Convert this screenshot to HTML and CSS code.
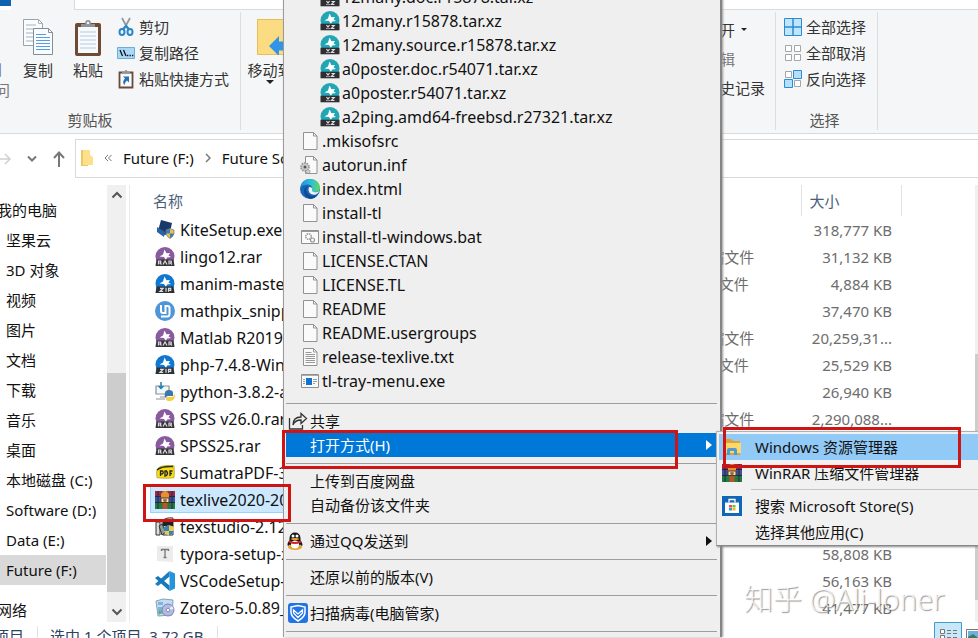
FILE: index.html
```html
<!DOCTYPE html>
<html lang="zh-CN">
<head>
<meta charset="utf-8">
<title>Future (F:)</title>
<link rel="stylesheet" href="styles.css">
</head>
<body>
<svg class="defs" aria-hidden="true">
  <defs>
    <linearGradient id="edge-a" x1="0" y1="0" x2="1" y2="0"><stop offset="0" stop-color="#1b8fe0"/><stop offset=".55" stop-color="#2fc0d8"/><stop offset="1" stop-color="#62d957"/></linearGradient>
    <symbol id="i-rar" viewBox="0 0 20 20"><circle cx="10" cy="9.500" r="9.500" fill="#8a5a9e"/><path d="M9.500 2.500l2 3.700 3.500-.2-1.500 2.500 2.500 1.500-4 .5-1 2.500-2-3-4.500-.5 3.500-2z" fill="#fff"/><path d="M1.500 12.500h17l1 6.500H.5z" fill="#37333b"/><path d="M3.500 17.500v-3.500h2q1 1-.5 2l1.500 1.500M8 17.500l2-3.500 2 3.500M14 17.500v-3.500h2q1 1-.5 2l1.500 1.500" fill="none" stroke="#ddd" stroke-width="1.200"/></symbol>
    <symbol id="i-zip" viewBox="0 0 20 20"><circle cx="10" cy="9.500" r="9.500" fill="#1078d0"/><path d="M9.500 2.500l2 3.700 3.500-.2-1.500 2.500 2.500 1.500-4 .5-1 2.500-2-3-4.500-.5 3.500-2z" fill="#fff"/><path d="M1.500 12.500h17l1 6.500H.5z" fill="#2b3138"/><path d="M5 14.300h3.200l-3.200 3h3.200M11 13.800v4M13.500 17.800v-3.500h2.200v2h-2" fill="none" stroke="#ddd" stroke-width="1.200"/></symbol>
    <symbol id="i-xz" viewBox="0 0 20 20"><circle cx="10" cy="9.500" r="9.500" fill="#22a5b4"/><path d="M9.500 2.500l2 3.700 3.500-.2-1.500 2.500 2.500 1.500-4 .5-1 2.500-2-3-4.500-.5 3.500-2z" fill="#fff"/><path d="M.5 12.700h19v6.600H.5z" fill="#2d2f33"/><path d="M6.500 14l3 4M9.500 14l-3 4M11.500 14.500h2.700l-2.700 3h3" fill="none" stroke="#ddd" stroke-width="1.200"/></symbol>
    <symbol id="i-kite" viewBox="0 0 20 20"><path d="M6 0l11 3-2 9-5 3-7-4z" fill="#173a6b"/><path d="M2 7l8 5-1 5-7-5z" fill="#2c62a8"/><path d="M11 10l4-1.500L19 10v3.500q-1 3.500-4 5-3-1.500-4-5z" fill="#e8c24a" stroke="#6b7380" stroke-width=".7"/><path d="M15 8.800V13.500h-4v-3.300zM15 13.500h4q-1 3.300-4 4.700z" fill="#3d7ab8"/></symbol>
    <symbol id="i-mathpix" viewBox="0 0 20 20"><circle cx="10" cy="10" r="10" fill="#4e96d8"/><path d="M6 4v6q0 2 2 2h2.500V5h2q2 0 2 2v6q0 2.500-2.500 2.500H6" fill="none" stroke="#fff" stroke-width="2"/></symbol>
    <symbol id="i-python" viewBox="0 0 20 20"><path d="M1 4h13v8H1zM5 15h6M1 17h9" fill="#f4f8fb" stroke="#8b9299" stroke-width="1.200"/><path d="M6 0v6M3.500 4L6 6.500 8.500 4" fill="none" stroke="#1583b5" stroke-width="1.500"/><path d="M10 11q0-3 4-3t4 3v3h-5q-2 0-2 2-2-1-1-5z" fill="#3878ac"/><path d="M19 12q2 1 0 5-1 2-4 2-4 0-4-2v-1q0-1 2-1h4q2 0 2-3z" fill="#f5cf45"/></symbol>
    <symbol id="i-pdf" viewBox="0 0 20 20"><path d="M5 3.500Q10 2 19 2.800q.8 6 0 12-9 1-17 0Q1 10 2 7z" fill="#f6dc18" stroke="#9a8c1a" stroke-width=".6"/><path d="M2 7Q6 3 18 3.500" stroke="#33300c" fill="none" stroke-width="1.500"/><path d="M5.500 13V8h2q1.500 1.300 0 2.800H6M10 13V8h1.500q2 2.500 0 4.500zM15 13V8h2.500M15 10.500h2" fill="none" stroke="#222" stroke-width="1.300"/></symbol>
    <symbol id="i-winrar" viewBox="0 0 20 20"><path d="M0 1h20v6H0z" fill="#9c2847"/><path d="M0 7h20v6H0z" fill="#3d50a2"/><path d="M0 13h20v6H0z" fill="#237a43"/><path d="M0 6.500h20M0 12.500h20M3 1v18M17 1v18" stroke="#222c38" stroke-width="1"/><path d="M7.500 1h5v18h-5z" fill="#b5562b"/><path d="M6 4q4-6 8 0v5H6z" fill="#e3922d"/><path d="M6 8h8v4.500H6z" fill="#e9e4da" stroke="#5f3218"/><path d="M8 8.500q2 2.500 4 0v3H8z" fill="#c98233"/><path d="M9.500 9h1v3h-1z" fill="#444"/></symbol>
    <symbol id="i-texstudio" viewBox="0 0 20 20"><path d="M1 5h4v13H1zM7 4q4-4 11-3v17H8z" fill="#ddd" stroke="#333"/><path d="M8 2h10v7H8z" fill="#222"/><path d="M10 3h6v2h-6z" fill="#ddd"/><path d="M4 9l3-2 4 8-4 3z" fill="#8b9992" stroke="#333"/><path d="M9 10l5-2 5 2v4q-1 3-5 5-4-2-5-5z" fill="#ecc84c"/><path d="M14 8v6H9v-4zM14 14h5q-1 3-5 5z" fill="#3482bb"/></symbol>
    <symbol id="i-typora" viewBox="0 0 20 20"><path d="M2 2h16v16l-16-1z" fill="#ececec"/><path d="M6.500 7V5.500h7V7M10 5.500v8M8.500 13.500h3" fill="none" stroke="#777" stroke-width="1.300"/></symbol>
    <symbol id="i-vscode" viewBox="0 0 20 20"><path d="M14.500 0L20 2.500v15L14.500 20z" fill="#2495dc"/><path d="M14.500 0v5.500L3 15 0 13z" fill="#1b7cc2"/><path d="M14.500 20v-5.500L3 5 0 7z" fill="#1777bb"/></symbol>
    <symbol id="i-zotero" viewBox="0 0 20 20"><path d="M1 3l7-2 10 1-1 15-14 1z" fill="#c4dcef" stroke="#82a2bd"/><path d="M3 4h5v3H3zM3 9h5v7H3z" fill="#7db6dc"/><path d="M4 12l3 2-3 3z" fill="#63ad58"/><circle cx="13" cy="12" r="6" fill="#b5bae3" stroke="#7c83ba"/><path d="M13 12l4-4 1.500 3z" fill="#f2f0ff"/><circle cx="13" cy="12" r="1.800" fill="#fff" stroke="#858bb8"/></symbol>
    <symbol id="i-file" viewBox="0 0 20 20"><path d="M3.500 1.500h10l3.500 3.500v13.500H3.500z" fill="#fafafa" stroke="#929292"/><path d="M13.500 1.500V5H17" fill="none" stroke="#929292"/></symbol>
    <symbol id="i-text" viewBox="0 0 20 20"><path d="M3.500 1.500h10l3.500 3.500v13.500H3.500z" fill="#fafafa" stroke="#929292"/><path d="M13.500 1.500V5H17M5.500 5.500h6M5.500 7.500h9.500M5.500 9.500h9.500M5.500 11.500h9.500M5.500 13.500h9.500M5.500 15.500h9.500" fill="none" stroke="#999"/></symbol>
    <symbol id="i-inf" viewBox="0 0 20 20"><path d="M5.500 1.500h8l3.500 3.500v13.500H5.500z" fill="#fafafa" stroke="#929292"/><path d="M13.500 1.500V5H17" fill="none" stroke="#929292"/><circle cx="5" cy="12" r="4" fill="#ccc" stroke="#999" stroke-width="1.800" stroke-dasharray="1.500 1"/><circle cx="5" cy="12" r="1.500" fill="#555"/><circle cx="8" cy="16.500" r="2" fill="#ccc" stroke="#888" stroke-dasharray="1 1"/></symbol>
    <symbol id="i-edge" viewBox="0 0 20 20"><circle cx="10" cy="10" r="10" fill="#1767b5"/><path d="M.5 8Q2 0 10 0q9 0 10 8.500 0 4.500-5 4.500-3.500 0-3-2 1-5-4-5.500Q3 5.500.5 8z" fill="url(#edge-a)"/><path d="M8 7q-4 4 0 8 4 3.500 9.500.5-2 4-7 4.500Q4 18 4 12q0-4 4-5z" fill="#104a94"/><path d="M9 8q4 0 3 3 0 2 3 2.200 2.500.2 4.500-1.500-1 3-4 4-4 .5-6-2-1.800-3-.5-5.700z" fill="#eef3f6"/></symbol>
    <symbol id="i-bat" viewBox="0 0 20 20"><path d="M1.500 3.500h17v13h-17z" fill="#fafafa" stroke="#909090"/><path d="M2 4.500h16" stroke="#999"/><circle cx="8.500" cy="9.500" r="2.800" fill="none" stroke="#999" stroke-dasharray="1.500 .7" stroke-width="1.500"/><circle cx="12.500" cy="13" r="2" fill="none" stroke="#999" stroke-width="1.200"/></symbol>
    <symbol id="i-exe" viewBox="0 0 20 20"><path d="M1.500 3.500h17v13h-17z" fill="#fafafa" stroke="#909090"/><path d="M2 4.500h16" stroke="#aaa"/><path d="M6 7h6v7H6z" fill="#1173cf"/><path d="M3 8.500h2M3 10.500h2M3 12.500h2M13 8.500h4M13 10.500h4M13 12.500h2" stroke="#999"/></symbol>
    <symbol id="i-share" viewBox="0 0 20 20"><path d="M1.500 7v11h13v-4M5 14q0-8 8-8V2.500l5.500 5-5.500 5V9q-6 0-8 5z" fill="none" stroke="#333" stroke-width="1.300"/></symbol>
    <symbol id="i-qq" viewBox="0 0 18 20"><ellipse cx="9" cy="16" rx="7" ry="3" fill="#e8a22b"/><path d="M3.500 7Q4 1.500 9 1.500T14.500 7v2q3 5 1.500 6l-2-1.500q-5 5-10 0L2 15Q.5 13 3.500 9z" fill="#171717"/><ellipse cx="9" cy="13.500" rx="4" ry="4" fill="#fff"/><path d="M3 9q6 4 12 0v2.500q-6 3-12 0z" fill="#d6222b"/><circle cx="7" cy="5" r="1.500" fill="#fff"/><circle cx="11" cy="5" r="1.500" fill="#fff"/><ellipse cx="9" cy="8" rx="4" ry="1" fill="#eda528"/></symbol>
    <symbol id="i-shield" viewBox="0 0 20 20"><rect width="20" height="20" rx="3" fill="#2273e6"/><path d="M3 4l7-1.500L17 4v5q0 5-7 9-7-4-7-9z" fill="none" stroke="#fff" stroke-width="1.500"/><path d="M5.500 7L10 11l4.500-4v3L10 14.500 5.500 10z" fill="none" stroke="#fff" stroke-width="1.300"/></symbol>
    <symbol id="i-explorer" viewBox="0 0 20 20"><path d="M3 2h6l2 2h7v14H3z" fill="#e2a32e"/><path d="M3 6h16v10H3z" fill="#fbd86d"/><path d="M5 18v-5q0-2 2-2h6q2 0 2 2v5h-3v-4H8v4z" fill="#4c9bd4"/></symbol>
    <symbol id="i-store" viewBox="0 0 20 20"><path d="M0 0h20v20H0z" fill="#1067b8"/><path d="M3 6.500h14V17H3z" fill="#fff"/><path d="M7 6.500V3.500h6v3" fill="none" stroke="#fff" stroke-width="1.300"/><path d="M7 9h3v2.500H7z" fill="#e8503a"/><path d="M10.500 9h3v2.500h-3z" fill="#7cb83c"/><path d="M7 12h3v2.500H7z" fill="#2b9be0"/><path d="M10.500 12h3v2.500h-3z" fill="#f0b52c"/></symbol>
    <symbol id="i-copy" viewBox="0 0 30 36"><path d="M.5.500h15l4 4v22H.5z" fill="#fafcfe" stroke="#9aa1a8"/><path d="M15.500.500v4h4M3 6h10M3 10h14M3 14h14M3 18h14M3 22h14" fill="none" stroke="#a3b4c5"/><path d="M10.500 9.500h15l4 4v22h-19z" fill="#f8fbff" stroke="#858d96"/><path d="M25.500 9.500v4h4" fill="none" stroke="#858d96"/><path d="M13 15.500h10M13 18.500h14M13 21.500h14M13 24.500h14M13 27.500h14M13 30.500h14" stroke="#5a9ce0"/></symbol>
    <symbol id="i-paste" viewBox="0 0 28 38"><rect x="1" y="4" width="26" height="33" rx="2" fill="#704a33"/><path d="M4 8h20v26H4z" fill="#f7fafc"/><path d="M6 13h16M6 17h16M6 21h16M6 25h16M6 29h16" stroke="#b5cce0"/><path d="M7 8V5h4q0-4 3-4t3 4h4v3z" fill="#8e9499"/><circle cx="14" cy="4" r="1.300" fill="#f3f3f3"/></symbol>
    <symbol id="i-cut" viewBox="0 0 18 20"><path d="M5 1l6.500 12M13 1L6.500 13" stroke="#9299a0" stroke-width="1.800"/><ellipse cx="5" cy="15" rx="2.500" ry="3" fill="none" stroke="#2787c9" stroke-width="2"/><ellipse cx="13" cy="15" rx="2.500" ry="3" fill="none" stroke="#2787c9" stroke-width="2"/><path d="M6 12l3-3 3 3" fill="none" stroke="#2787c9" stroke-width="2"/></symbol>
    <symbol id="i-path" viewBox="0 0 18 12"><path d="M.5.500h17v11H.5z" fill="#a9d9f7" stroke="#6fadd5"/><path d="M3 3l2.500 6M6.500 3L9 9" stroke="#111" stroke-width="1.300"/><path d="M10 8.500h1.300M12.500 8.500h1.300M15 8.500h1.300" stroke="#111" stroke-width="1.300"/></symbol>
    <symbol id="i-shortcut" viewBox="0 0 18 20"><path d="M2.500 3.500h13v15h-13z" fill="#f8fafc" stroke="#684b3b" stroke-width="1.800"/><path d="M5 4.500V3h2.500q0-2 1.500-2t1.500 2H13v1.500z" fill="#90959a"/><path d="M6 7.500h6v6l-2-2q-2 1-2.500 4.500-3-3 .5-6.500z" fill="#2770b1"/></symbol>
    <symbol id="i-move" viewBox="0 0 36 36"><path d="M.5.500h35v35H.5z" fill="#fbdc82" stroke="#e8bd55"/><path d="M12 27L22 17v5.500h14v9H22V37z" fill="#2f95e4"/></symbol>
    <symbol id="i-all" viewBox="0 0 18 18"><path d="M.5.500h17v17H.5z" fill="#bfe4fb" stroke="#2b8cd0"/><path d="M9 0v18M0 9h18" stroke="#2b8cd0" stroke-width="1.500"/></symbol>
    <symbol id="i-none" viewBox="0 0 18 18"><path d="M1.500 1.500h6v6h-6zM10.500 1.500h6v6h-6zM1.500 10.500h6v6h-6zM10.500 10.500h6v6h-6z" fill="#fff" stroke="#a5a5a5"/></symbol>
    <symbol id="i-invert" viewBox="0 0 18 18"><path d="M1.500 1.500h6v6h-6zM10.500 10.500h6v6h-6z" fill="#fff" stroke="#a5a5a5"/><path d="M9.500.500h8v8h-8zM.5 9.500h8v8h-8z" fill="#b3dffa" stroke="#2b8cd0"/></symbol>
  </defs>
</svg>

<div class="window">
  <div class="tabs"><span class="tab-file"></span><span class="tab-home"></span><span class="tab-rest"></span></div>

  <header class="ribbon">
    <section class="group clipboard">
      <div class="tools">
        <button class="big pin"><span class="pin-top">固定到</span><span>快速访问</span></button>
        <button class="big copy"><svg width="30" height="36"><use href="#i-copy"/></svg>复制</button>
        <button class="big paste"><svg width="28" height="38"><use href="#i-paste"/></svg>粘贴</button>
        <div class="stack">
          <button><svg width="18" height="20"><use href="#i-cut"/></svg>剪切</button>
          <button><svg width="18" height="12"><use href="#i-path"/></svg>复制路径</button>
          <button><svg width="18" height="20"><use href="#i-shortcut"/></svg>粘贴快捷方式</button>
        </div>
      </div>
      <p class="caption">剪贴板</p>
    </section>
    <section class="group organize">
      <button class="big move"><svg width="36" height="36"><use href="#i-move"/></svg>移动到<i class="caret"></i></button>
    </section>
    <section class="group open">
      <button>打开<i class="caret"></i></button>
      <button class="dim">编辑</button>
      <button>历史记录</button>
    </section>
    <section class="group select">
      <div class="stack">
        <button><svg width="18" height="18"><use href="#i-all"/></svg>全部选择</button>
        <button><svg width="18" height="18"><use href="#i-none"/></svg>全部取消</button>
        <button><svg width="18" height="18"><use href="#i-invert"/></svg>反向选择</button>
      </div>
      <p class="caption">选择</p>
    </section>
  </header>

  <div class="location">
    <div class="arrows">
      <svg width="11" height="14" viewBox="0 0 11 14"><path d="M0 7h10M5 2l5 5-5 5" fill="none" stroke="#d0d0d0" stroke-width="1.500"/></svg>
      <svg width="10" height="8" viewBox="0 0 10 8"><path d="M1 1.500l4 4 4-4" fill="none" stroke="#777" stroke-width="2"/></svg>
      <svg width="12" height="16" viewBox="0 0 12 16"><path d="M6 16V2M1 7l5-5.500L11 7" fill="none" stroke="#777" stroke-width="2"/></svg>
    </div>
    <nav class="address">
      <svg width="12" height="17" viewBox="0 0 12 17"><path d="M0 1h7v16H0z" fill="#edc763"/><path d="M2 1h7v5l3 2v8H2z" fill="#fce08c"/></svg>
      <svg width="8" height="8" viewBox="0 0 8 8"><path d="M4 1L1 4l3 3M7.500 1l-3 3 3 3" fill="none" stroke="#777"/></svg>
      <a href="#f">Future (F:)</a>
      <svg width="6" height="10" viewBox="0 0 6 10"><path d="M1 1l4 4-4 4" fill="none" stroke="#777" stroke-width="1.500"/></svg>
      <a href="#s">Future Software</a>
    </nav>
  </div>

  <main class="content">
    <nav class="tree">
      <a class="root" href="#pc">我的电脑</a>
      <a href="#n1">坚果云</a>
      <a href="#n2">3D 对象</a>
      <a href="#n3">视频</a>
      <a href="#n4">图片</a>
      <a href="#n5">文档</a>
      <a href="#n6">下载</a>
      <a href="#n7">音乐</a>
      <a href="#n8">桌面</a>
      <a href="#c">本地磁盘 (C:)</a>
      <a href="#d">Software (D:)</a>
      <a href="#e">Data (E:)</a>
      <a class="current" href="#f">Future (F:)</a>
      <a class="root network" href="#net">网络</a>
    </nav>
    <div class="scroll">
      <svg width="12" height="8" viewBox="0 0 12 8"><path d="M1.500 6.500L6 2l4.500 4.500" fill="none" stroke="#555" stroke-width="2"/></svg>
      <span class="thumb"></span>
      <svg width="12" height="8" viewBox="0 0 12 8"><path d="M1.500 1.500L6 6l4.500-4.500" fill="none" stroke="#555" stroke-width="2"/></svg>
    </div>
    <div class="files">
      <table>
        <thead><tr><th class="name">名称</th><th class="type"></th><th class="size"><span>大小</span></th></tr></thead>
        <tbody>
          <tr><td><svg><use href="#i-kite"/></svg>KiteSetup.exe</td><td></td><td>318,777 KB</td></tr>
          <tr><td><svg><use href="#i-rar"/></svg>lingo12.rar</td><td>RAR 压缩文件</td><td>31,132 KB</td></tr>
          <tr><td><svg><use href="#i-zip"/></svg>manim-master.zip</td><td>ZIP 压缩文件</td><td>4,884 KB</td></tr>
          <tr><td><svg><use href="#i-mathpix"/></svg>mathpix_snipping</td><td></td><td>37,470 KB</td></tr>
          <tr><td><svg><use href="#i-rar"/></svg>Matlab R2019b.rar</td><td>RAR 压缩文件</td><td>20,259,31...</td></tr>
          <tr><td><svg><use href="#i-zip"/></svg>php-7.4.8-Win32</td><td>ZIP 压缩文件</td><td>25,529 KB</td></tr>
          <tr><td><svg><use href="#i-python"/></svg>python-3.8.2-amd64</td><td></td><td>26,940 KB</td></tr>
          <tr><td><svg><use href="#i-rar"/></svg>SPSS v26.0.rar</td><td>RAR 压缩文件</td><td>2,290,088...</td></tr>
          <tr><td><svg><use href="#i-rar"/></svg>SPSS25.rar</td><td></td><td></td></tr>
          <tr><td><svg><use href="#i-pdf"/></svg>SumatraPDF-3.2</td><td></td><td></td></tr>
          <tr class="picked"><td><svg><use href="#i-winrar"/></svg>texlive2020-2020</td><td></td><td></td></tr>
          <tr><td><svg><use href="#i-texstudio"/></svg>texstudio-2.12.22</td><td></td><td></td></tr>
          <tr><td><svg><use href="#i-typora"/></svg>typora-setup-x64</td><td></td><td>58,808 KB</td></tr>
          <tr><td><svg><use href="#i-vscode"/></svg>VSCodeSetup-x64</td><td></td><td>56,163 KB</td></tr>
          <tr><td><svg><use href="#i-zotero"/></svg>Zotero-5.0.89_setup</td><td></td><td>41,477 KB</td></tr>
        </tbody>
      </table>
    </div>
    <div class="scroll slim"><span class="thumb"></span></div>
  </main>

  <footer class="status">
    <span class="count">项目</span>
    <span class="chosen">选中 1 个项目&nbsp; 3.72 GB</span>
    <span class="views">
      <svg width="28" height="20" viewBox="0 0 28 20"><path d="M.5.500h27v22H.5z" fill="#c8e8f9" stroke="#3f9ccb"/><path d="M6.500 7.500h4v4h-4zM6.500 13.500h4v4h-4z" fill="#fff" stroke="#777"/><path d="M13 8.500h4M19 8.500h4M13 11.500h4M19 11.500h4M13 15.500h4M19 15.500h4" stroke="#777"/></svg>
      <svg width="12" height="20" viewBox="0 0 12 20"><path d="M.5 7.500h14v14H.5z" fill="#fff" stroke="#777"/><path d="M2 9h10v11H2z" fill="#6db1df"/><path d="M2 15l5-3 5 4v4H2z" fill="#3b7b62"/></svg>
    </span>
  </footer>
</div>

<div class="menu" role="menu">
  <div class="files-list">
    <button class="deep"><svg><use href="#i-xz"/></svg>12many.doc.r15878.tar.xz</button>
    <button class="deep"><svg><use href="#i-xz"/></svg>12many.r15878.tar.xz</button>
    <button class="deep"><svg><use href="#i-xz"/></svg>12many.source.r15878.tar.xz</button>
    <button class="deep"><svg><use href="#i-xz"/></svg>a0poster.doc.r54071.tar.xz</button>
    <button class="deep"><svg><use href="#i-xz"/></svg>a0poster.r54071.tar.xz</button>
    <button class="deep"><svg><use href="#i-xz"/></svg>a2ping.amd64-freebsd.r27321.tar.xz</button>
    <button><svg><use href="#i-file"/></svg>.mkisofsrc</button>
    <button><svg><use href="#i-inf"/></svg>autorun.inf</button>
    <button><svg><use href="#i-edge"/></svg>index.html</button>
    <button><svg><use href="#i-file"/></svg>install-tl</button>
    <button><svg><use href="#i-bat"/></svg>install-tl-windows.bat</button>
    <button><svg><use href="#i-file"/></svg>LICENSE.CTAN</button>
    <button><svg><use href="#i-file"/></svg>LICENSE.TL</button>
    <button><svg><use href="#i-file"/></svg>README</button>
    <button><svg><use href="#i-file"/></svg>README.usergroups</button>
    <button><svg><use href="#i-text"/></svg>release-texlive.txt</button>
    <button><svg><use href="#i-exe"/></svg>tl-tray-menu.exe</button>
  </div>
  <hr class="wide">
  <button><svg><use href="#i-share"/></svg>共享</button>
  <button class="active"><svg></svg>打开方式(H)<i class="more"></i></button>
  <hr>
  <button><svg></svg>上传到百度网盘</button>
  <button><svg></svg>自动备份该文件夹</button>
  <hr>
  <button class="qq"><svg><use href="#i-qq"/></svg>通过QQ发送到<i class="more"></i></button>
  <hr>
  <button><svg></svg>还原以前的版本(V)</button>
  <hr>
  <button><svg><use href="#i-shield"/></svg>扫描病毒(电脑管家)</button>
  <hr>
</div>

<div class="submenu" role="menu">
  <button class="hover"><svg><use href="#i-explorer"/></svg>Windows 资源管理器</button>
  <button><svg><use href="#i-winrar"/></svg>WinRAR 压缩文件管理器</button>
  <hr>
  <button><svg><use href="#i-store"/></svg>搜索 Microsoft Store(S)</button>
  <button><svg></svg>选择其他应用(C)</button>
</div>

<div class="mark mark-file"></div>
<div class="mark mark-open"></div>
<div class="mark mark-app"></div>
<div class="watermark">知乎 @Ali-loner</div>
</body>
</html>
```
FILE: styles.css
```css
* { box-sizing: border-box; }
body {
  margin: 0;
  position: relative;
  height: 100vh;
  overflow: hidden;
  background: #fff;
  color: #111;
  font-family: "Noto Sans", "Noto Sans CJK SC", sans-serif;
  font-size: 15px;
  line-height: 20px;
}
.defs { position: absolute; width: 0; height: 0; }
button {
  display: flex;
  align-items: center;
  padding: 0;
  border: 0;
  background: none;
  color: inherit;
  font: inherit;
  white-space: nowrap;
  text-align: left;
}
a { color: inherit; text-decoration: none; white-space: nowrap; }
p { margin: 0; }
svg { flex: none; display: block; }

.window { display: flex; flex-direction: column; height: 100%; }

.tabs { display: flex; height: 10px; background: #fff; }
.tab-file { width: 11px; height: 6px; background: #0f62b0; }
.tab-home { width: 64px; background: #f5f6f7; border-right: 1px solid #dadbdc; }
.tab-rest { flex: 1; border-bottom: 1px solid #dadbdc; }

.ribbon {
  display: flex;
  height: 124px;
  padding: 2px 0 3px;
  background: #f5f6f7;
  border-bottom: 1px solid #d8d9da;
  color: #333;
}
.group { position: relative; display: flex; flex-direction: column; border-right: 1px solid #dcdddf; }
.tools { display: flex; }
.caret {
  width: 0;
  height: 0;
  border: 3px solid transparent;
  border-top-color: #222;
  border-bottom: 0;
}
.caption { margin-top: auto; text-align: center; color: #555; }
.clipboard { width: 241px; }
.clipboard .caption { padding-right: 60px; }
.big { flex-direction: column; padding-top: 7px; text-align: center; }
.big svg { margin-bottom: 5px; }
.pin { width: 10px; padding-top: 48px; align-items: flex-end; overflow: hidden; color: #777; }
.pin-top { padding-right: 8px; }
.copy { width: 56px; }
.paste { width: 44px; }
.paste svg { margin-bottom: 3px; }
.stack { display: flex; flex-direction: column; padding: 2px 0 0 7px; }
.stack button { height: 26px; gap: 4px; }
.organize { width: 440px; padding-left: 6px; border-right: 0; align-items: flex-start; }
.move svg { margin-left: 10px; }
.move .caret { border-width: 4px 4px 0; }
.open { width: 95px; padding: 3px 11px 0 0; align-items: flex-start; }
.open button { height: 29px; width: 84px; justify-content: flex-end; gap: 6px; }
.open button:first-child { width: 66px; }
.open .dim { width: 54px; color: #777; }
.select { width: 102px; }
.select .stack { padding-left: 8px; }
.select .caption { padding-right: 4px; }

.location { display: flex; margin-top: 5px; height: 39px; }
.arrows { display: flex; align-items: center; justify-content: space-between; width: 75px; padding-right: 10px; }
.address { flex: 1; display: flex; align-items: center; padding: 0 0 2px 5px; gap: 11px; border: 1px solid #d9d9d9; border-right: 0; }

.content { display: flex; flex: 1; min-height: 0; padding-top: 7px; }
.tree { width: 106px; padding-top: 10px; margin-right: 1px; overflow: hidden; }
.tree a { display: block; height: 30px; line-height: 30px; padding-left: 6px; }
.tree .root { display: flex; margin-left: -9px; }
.tree .current { background: #d9d9d9; }
.tree .network { margin-top: 10px; }
.scroll { display: flex; flex-direction: column; align-items: center; width: 19px; padding: 6px 0; background: #f0f0f0; }
.scroll .thumb { width: 100%; height: 219px; margin-top: auto; margin-bottom: 16px; background: #cdcdcd; }
.slim { width: 3px; }
.slim .thumb { height: 246px; }
.files { flex: 1; margin-left: 3px; border-left: 1px solid #eaeaea; overflow: hidden; }
table { border-collapse: collapse; table-layout: fixed; width: 771px; }
th { height: 31px; padding: 0; font-weight: 400; text-align: left; color: #4c607a; }
th.name { width: 532px; padding-left: 23px; }
th.type { width: 139px; border-right: 1px solid #e2e2e2; }
th.size { width: 100px; padding-left: 8px; border-right: 1px solid #e2e2e2; }
td { height: 27px; padding: 0; white-space: nowrap; color: #6d6d6d; }
td:first-child { display: flex; align-items: center; gap: 5px; padding-left: 25px; color: #111; font-size: 16px; }
td svg { width: 20px; height: 20px; }
td:last-child { text-align: right; padding-right: 9px; }
.picked td:first-child { margin-left: 20px; padding-left: 4px; background: #cce8ff; border: 1px solid #99d1ff; }

.status { display: flex; height: 16px; padding-top: 4px; overflow: hidden; color: #2b4262; }
.count { width: 38px; margin-right: 12px; text-indent: -6px; border-right: 1px solid #e2e2e2; }
.chosen { padding-right: 13px; border-right: 1px solid #e2e2e2; }
.status span { flex: none; height: 20px; white-space: nowrap; }
.status .views { display: flex; gap: 4px; margin-left: auto; margin-top: -4px; }

.menu {
  position: absolute;
  left: 283px;
  top: -15px;
  width: 439px;
  padding: 0 3px 0 2px;
  background: #efefef;
  border-left: 1px solid #9b9b9b;
  border-right: 2px solid #858585;
  box-shadow: 1px 0 2px #999;
}
.menu svg { width: 20px; height: 20px; }
.menu button { width: 100%; height: 24px; padding-left: 2px; gap: 2px; }
.menu .files-list button { padding-left: 14px; font-size: 16px; }
.menu .files-list .deep { padding-left: 34px; }
.menu .active { background: #0078d7; color: #fff; }
.menu .qq { padding: 0; gap: 6px; }
.menu .qq svg { width: 18px; }
.more {
  margin: 0 5px 0 auto;
  border: 5px solid transparent;
  border-left: 6px solid currentColor;
  border-right: 0;
}
hr { margin: 0; border: 0; height: 12px; background: linear-gradient(#9d9d9d, #9d9d9d) 0 6px / 100% 1px no-repeat; }
hr.wide { height: 16px; background-position-y: 10px; }

.submenu {
  position: absolute;
  left: 716px;
  right: -6px;
  top: 431px;
  padding: 2px 3px 0 2px;
  background: #f1f1f1;
  border: 1px solid #b0b0b0;
  border-bottom-color: #888;
  box-shadow: 1px 1px 2px #888;
}
.submenu button { width: 100%; height: 26px; padding-left: 3px; gap: 13px; }
.submenu svg { width: 20px; height: 20px; }
.submenu .hover { background: #91c9f7; }
.submenu hr { height: 7px; margin-left: 32px; background: linear-gradient(#c4c4c4, #c4c4c4) 0 3px / 100% 1px no-repeat; }

.mark { position: absolute; border: 3px solid #cf1414; }
.mark-file { left: 143px; top: 484px; width: 148px; height: 38px; }
.mark-open { left: 282px; top: 430px; width: 396px; height: 39px; }
.mark-app { left: 723px; top: 427px; width: 238px; height: 41px; }
.watermark {
  position: absolute;
  left: 744px;
  top: 580px;
  font-size: 29px;
  font-weight: 300;
  line-height: 38px;
  white-space: nowrap;
  color: rgba(255, 255, 255, .75);
  text-shadow: 1px 1px 1px rgba(110, 110, 110, .7);
}
```
